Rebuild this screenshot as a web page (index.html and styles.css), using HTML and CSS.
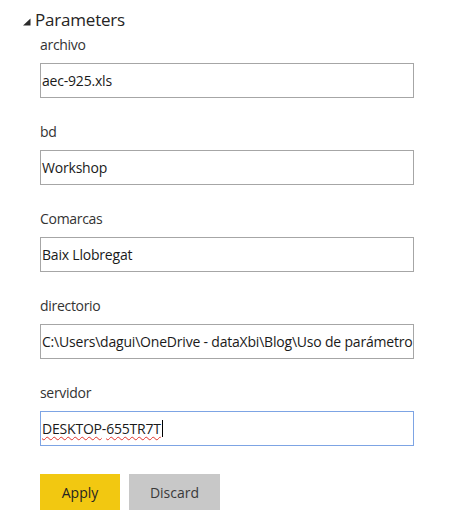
FILE: index.html
```html
<!DOCTYPE html>
<html lang="es">
<head>
<meta charset="utf-8">
<title>Parameters</title>
<link rel="stylesheet" href="styles.css">
</head>
<body>
<div class="panel">
  <div class="header">
    <svg class="caret-icon" width="9" height="8" viewBox="0 0 9 8"><polygon points="8.5,0.5 8.5,7.5 1,7.5" fill="#2b2b2b"/></svg>
    <span class="title">Parameters</span>
  </div>
  <div class="fields">
    <div class="field">
      <div class="label">archivo</div>
      <div class="box"><span class="val">aec-925.xls</span></div>
    </div>
    <div class="field">
      <div class="label">bd</div>
      <div class="box"><span class="val">Workshop</span></div>
    </div>
    <div class="field">
      <div class="label">Comarcas</div>
      <div class="box"><span class="val">Baix Llobregat</span></div>
    </div>
    <div class="field">
      <div class="label">directorio</div>
      <div class="box"><span class="val">C:\Users\dagui\OneDrive - dataXbi\Blog\Uso de parámetro</span></div>
    </div>
    <div class="field">
      <div class="label">servidor</div>
      <div class="box focused"><span class="val"><span class="spell">DESKTOP</span>-<span class="spell">655TR7T</span></span><span class="cursor"></span></div>
    </div>
  </div>
  <div class="actions">
    <div class="btn apply">Apply</div>
    <div class="btn discard">Discard</div>
  </div>
</div>
</body>
</html>
```

FILE: styles.css
```css
html, body {
  margin: 0;
  padding: 0;
  background: #ffffff;
}
body {
  font-family: "Segoe UI", "Open Sans", "Noto Sans", sans-serif;
  color: #252423;
}
.panel {
  width: 458px;
  padding-top: 8px;
}
.header {
  display: flex;
  align-items: center;
  gap: 4px;
  padding-left: 22px;
  height: 24px;
}
.caret-icon {
  display: block;
  margin-top: 3px;
}
.title {
  font-size: 17px;
  line-height: 24px;
  letter-spacing: -0.2px;
  color: #252423;
}
.fields {
  display: flex;
  flex-direction: column;
  padding-left: 40px;
  margin-top: 3px;
}
.field {
  display: flex;
  flex-direction: column;
  margin-bottom: 24px;
}
.label {
  font-size: 14px;
  line-height: 20px;
  height: 20px;
  margin-bottom: 8px;
  letter-spacing: -0.3px;
  color: #333333;
}
.box {
  box-sizing: border-box;
  width: 374px;
  height: 35px;
  border: 1px solid #a6a6a6;
  display: flex;
  align-items: center;
  padding: 0 1px;
  overflow: hidden;
  white-space: nowrap;
  font-size: 14px;
  letter-spacing: -0.2px;
  color: #1a1a1a;
}
.box.focused {
  border-color: #7da4e4;
}
.spell {
  text-decoration: underline wavy #e0342b;
  text-decoration-thickness: 1px;
  text-underline-offset: 2px;
}
.cursor {
  display: inline-block;
  width: 1px;
  height: 17px;
  background: #000;
  margin-left: 1px;
}
.actions {
  display: flex;
  gap: 9px;
  padding-left: 40px;
  margin-top: 4px;
}
.btn {
  height: 36px;
  display: flex;
  align-items: center;
  justify-content: center;
  font-size: 14px;
  color: #252423;
}
.apply {
  width: 80px;
  background: #f2c811;
}
.discard {
  width: 91px;
  background: #c8c8c8;
  color: #3a3a3a;
}
```
